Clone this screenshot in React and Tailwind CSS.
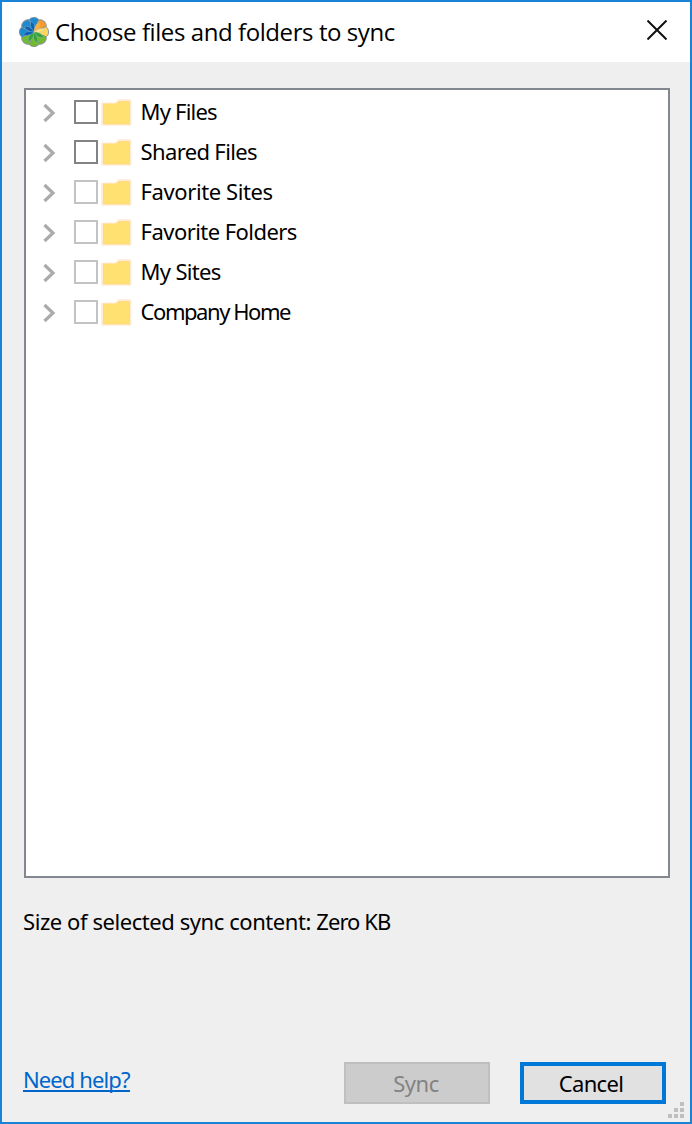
import React from "react";

const items = [
  { label: "My Files", enabled: true, spacing: "tracking-[-0.8px]" },
  { label: "Shared Files", enabled: true, spacing: "tracking-[-0.65px]" },
  { label: "Favorite Sites", enabled: false, spacing: "tracking-[-0.4px]" },
  { label: "Favorite Folders", enabled: false, spacing: "tracking-[-0.55px]" },
  { label: "My Sites", enabled: false, spacing: "tracking-[-0.7px]" },
  { label: "Company Home", enabled: false, spacing: "tracking-[-1.45px]" },
];

const petals = [
  { angle: 22.5, outer: "#1b8ad0", inner: "#0d62b4" },
  { angle: 67.5, outer: "#f79a2d", inner: "#fbb03c" },
  { angle: 112.5, outer: "#ffd75e", inner: "#ffe07a" },
  { angle: 157.5, outer: "#72bb30", inner: "#37a23c" },
  { angle: 202.5, outer: "#72bb30", inner: "#37a23c" },
  { angle: 247.5, outer: "#72bb30", inner: "#37a23c" },
  { angle: 292.5, outer: "#1b8ad0", inner: "#0d62b4" },
  { angle: 337.5, outer: "#1b8ad0", inner: "#0d62b4" },
];

function FlowerLogo() {
  return (
    <svg className="h-[30px] w-[30px] shrink-0" viewBox="-15 -15 30 30">
      <g transform="rotate(-22.5)">
        {petals.map((p) => (
          <path key={p.angle} d="M0 0L-5.2-11.4C-4-15.6 4-15.6 5.2-11.4Z" fill={p.outer} stroke="#8a9498" strokeWidth="1" strokeLinejoin="round" transform={`rotate(${p.angle})`} />
        ))}
        {petals.map((p) => (
          <path key={p.angle} d="M0 0C-3-3-4.5-7.5-3-10.5C0.5-9 1.6-5 0 0Z" fill={p.inner} stroke="#a3c4c4" strokeWidth="0.35" transform={`rotate(${p.angle})`} />
        ))}
      </g>
    </svg>
  );
}

function Chevron() {
  return (
    <svg className="mt-0.5 h-[20px] w-[14px] shrink-0" viewBox="0 0 14 20" fill="none">
      <path d="M2.5 2L11 10L2.5 18" stroke="#ababab" strokeWidth="3.2" />
    </svg>
  );
}

function Folder() {
  return (
    <svg className="ml-0.5 h-[28px] w-[32px] shrink-0" viewBox="0 0 32 28">
      <path d="M2.5 6H15.5L19 2.5H30V26.3H2.5Z" fill="#ffe172" stroke="#ffeedb" strokeWidth="3" strokeLinejoin="round" />
      <path d="M3.5 6H16.5L19.5 3.5H29.5V26H3.5Z" fill="#ffe172" stroke="#ffd97c" strokeWidth="1.2" strokeLinejoin="round" />
    </svg>
  );
}

function ResizeGrip() {
  return (
    <svg className="absolute bottom-1 right-1.5 h-4 w-4" viewBox="0 0 16 16" fill="#bfbfbf">
      <path d="M12 0h4v4h-4zM6 6h4v4H6zM12 6h4v4h-4zM0 12h4v4H0zM6 12h4v4H6zM12 12h4v4h-4z" />
    </svg>
  );
}

export default function App() {
  return (
    <div className="relative flex h-[1124px] w-[692px] flex-col border-2 border-[#1883d7] bg-[#efefef] font-['Noto_Sans','Open_Sans',sans-serif] text-[22px] leading-[30px] text-black">
      <header className="flex h-[60px] shrink-0 items-center bg-white pl-[17px] pr-[21px]">
        <FlowerLogo />
        <h1 className="ml-1.5 flex-1 whitespace-nowrap font-['Open_Sans','Noto_Sans',sans-serif] text-[24px] font-normal tracking-[-0.42px]">
          Choose files and folders to sync
        </h1>
        <button aria-label="Close" className="mb-1 flex h-6 w-6 items-center justify-center">
          <svg className="h-5 w-5" viewBox="0 0 20 20" fill="none" stroke="#111" strokeWidth="2">
            <path d="M0.5 0.5L19.5 19.5M19.5 0.5L0.5 19.5" />
          </svg>
        </button>
      </header>

      <main className="flex flex-1 flex-col px-[22px] pt-[26px]">
        <ul className="h-[790px] w-[646px] shrink-0 -mr-1 border-2 border-[#828790] bg-white pt-0.5">
          {items.map((item) => (
            <li key={item.label} className="flex h-10 items-center pl-4">
              <Chevron />
              <span className={`ml-[18px] h-6 w-6 shrink-0 border-2 bg-white ${item.enabled ? "border-[#838383]" : "border-[#c3c3c3]"}`} />
              <Folder />
              <span className={`mb-0.5 ml-[8.6px] whitespace-nowrap ${item.spacing}`}>{item.label}</span>
            </li>
          ))}
        </ul>
        <p className="-ml-px mt-[28px] whitespace-nowrap tracking-[-0.43px]">
          Size of selected sync content: <span className="tracking-[-0.95px]">Zero KB</span>
        </p>
      </main>

      <footer className="flex items-start pb-[18px] pl-[21px] pr-6">
        <a href="#" className="mt-1 whitespace-nowrap tracking-[-0.9px] text-[#0066cc]">
          <span className="block h-[26px] w-fit border-b-2 border-[#0066cc] leading-[26px]">Need help?</span>
        </a>
        <div className="ml-auto flex gap-[30px]">
          <button disabled className="flex h-[42px] w-[146px] items-center justify-center border-2 border-[#bfbfbf] bg-[#cccccc] pr-0.5 tracking-[-0.5px] text-[#838383]">
            Sync
          </button>
          <button className="flex h-[42px] w-[146px] items-center justify-center border-4 border-[#0078d7] bg-[#e1e1e1] pr-1 tracking-[-0.7px]">
            Cancel
          </button>
        </div>
      </footer>
      <ResizeGrip />
    </div>
  );
}
